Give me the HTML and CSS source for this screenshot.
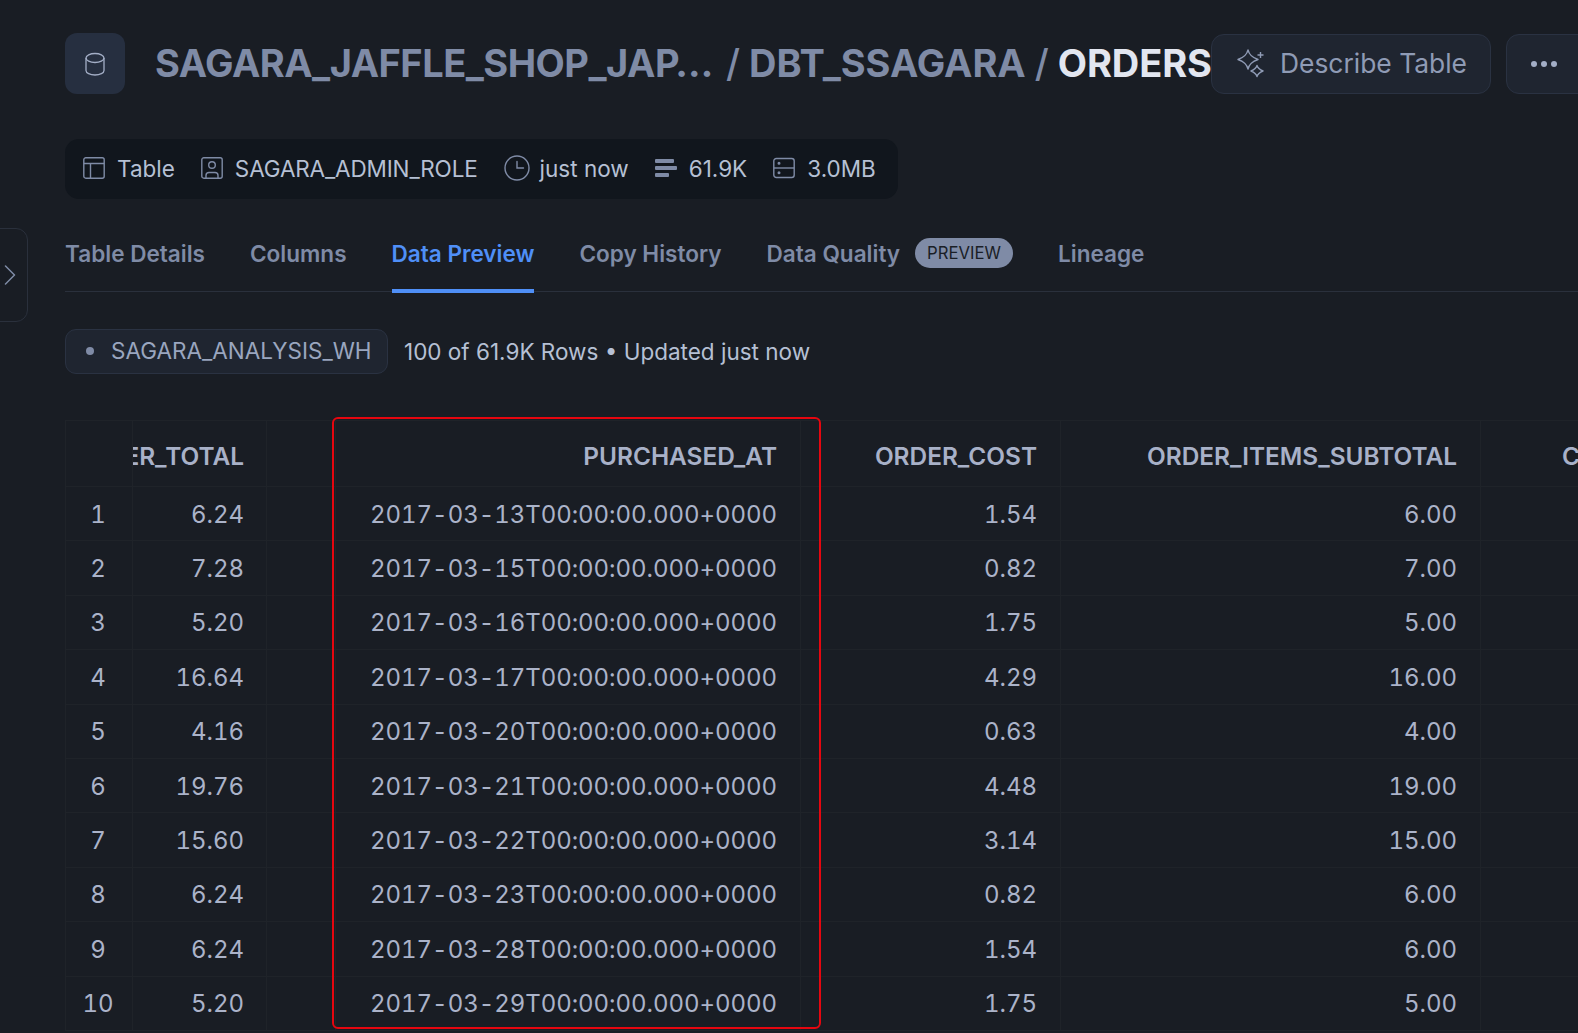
FILE: index.html
```html
<!DOCTYPE html>
<html lang="en">
<head>
<meta charset="utf-8">
<title>ORDERS</title>
<link rel="stylesheet" href="styles.css">
</head>
<body>
<button class="collapse" aria-label="Expand">
  <svg width="12" height="20" viewBox="0 0 12 20" fill="none" stroke="#7f8ba6" stroke-width="1.500" stroke-linecap="round" stroke-linejoin="round"><path d="M1.500 1l9 9-9 9"/></svg>
</button>
<main class="page">
  <header class="head">
    <div class="tile">
      <svg width="22" height="24" viewBox="0 0 22 24" fill="none" stroke="#a3aec6" stroke-width="1.300"><ellipse cx="11" cy="6" rx="9" ry="4.500"/><path d="M2 6v12.500c0 2.500 4 4.500 9 4.500s9-2 9-4.500V6"/></svg>
    </div>
    <h1 class="crumbs"><span class="crumb-db">SAGARA_JAFFLE_SHOP_JAP…</span><span class="sep">/</span><span>DBT_SSAGARA</span><span class="sep">/</span><span class="crumb-cur">ORDERS</span></h1>
    <button class="btn btn-describe">
      <svg width="30" height="30" viewBox="0 0 30 30" fill="none" stroke="#8f9bb5" stroke-width="1.400" stroke-linejoin="round"><path d="M12 2c1.200 4.600 3.400 7 10 9.500-6.600 2.500-8.800 4.900-10 9.500-1.200-4.600-3.400-7-10-9.500 6.600-2.500 8.800-4.900 10-9.500z"/><path d="M21 17.500c.7 2.500 2 3.800 6 5.500-4 1.700-5.300 3-6 5.500-.7-2.500-2-3.800-6-5.500 4-1.700 5.300-3 6-5.500z"/><path d="M24.500 4v6M21.500 7h6"/></svg>
      Describe Table
    </button>
    <button class="btn btn-more" aria-label="More"><i class="dot"></i><i class="dot"></i><i class="dot"></i></button>
  </header>

  <div class="meta">
    <span class="meta-item">
      <svg width="22" height="22" viewBox="0 0 22 22" fill="none" stroke="#7f8ba6" stroke-width="1.400"><rect x=".8" y=".8" width="20.400" height="20.400" rx="2"/><path d="M.8 6.500h20.400M7.500 6.500v14.700"/></svg>Table</span>
    <span class="meta-item meta-role">
      <svg width="22" height="22" viewBox="0 0 22 22" fill="none" stroke="#7f8ba6" stroke-width="1.400"><rect x=".8" y=".8" width="20.400" height="20.400" rx="2"/><circle cx="11" cy="8" r="3.300"/><path d="M5 21v-2.500a3 3 0 0 1 3-3h6a3 3 0 0 1 3 3V21"/></svg>SAGARA_ADMIN_ROLE</span>
    <span class="meta-item meta-time">
      <svg width="26" height="26" viewBox="0 0 26 26" fill="none" stroke="#7f8ba6" stroke-width="1.400" stroke-linecap="round"><circle cx="13" cy="13" r="12"/><path d="M13 6.500V13h6.500"/></svg>just now</span>
    <span class="meta-item">
      <svg width="22" height="22" viewBox="0 0 22 22" fill="#7f8ba6"><rect x="0" y="2" width="19" height="4" rx="1"/><rect x="0" y="9" width="22" height="4" rx="1"/><rect x="0" y="16" width="14" height="4" rx="1"/></svg>61.9K</span>
    <span class="meta-item">
      <svg width="22" height="22" viewBox="0 0 22 22" fill="none" stroke="#7f8ba6" stroke-width="1.400"><rect x=".8" y="1.500" width="20.400" height="19" rx="2.500"/><path d="M.8 11h20.400"/><circle cx="6" cy="6.200" r=".8" fill="#7f8ba6"/><circle cx="6" cy="15.800" r=".8" fill="#7f8ba6"/></svg>3.0MB</span>
  </div>

  <nav class="tabs">
    <a class="tab">Table Details</a>
    <a class="tab">Columns</a>
    <a class="tab active">Data Preview</a>
    <a class="tab">Copy History</a>
    <a class="tab tab-badged">Data Quality <span class="badge">PREVIEW</span></a>
    <a class="tab">Lineage</a>
  </nav>

  <div class="status">
    <span class="wh"><i class="wh-dot"></i>SAGARA_ANALYSIS_WH</span>
    <span class="rows">100 of 61.9K Rows • Updated just now</span>
  </div>

  <div class="grid-wrap">
    <div class="grid">
      <div class="c idx"></div><div class="c th num2"><span>ORDER_TOTAL</span></div><div class="c"></div><div class="c th"><span>PURCHASED_AT</span></div><div class="c th num5"><span>ORDER_COST</span></div><div class="c th num5"><span>ORDER_ITEMS_SUBTOTAL</span></div><div class="c th last"><span>C</span></div>

      <div class="c idx">1</div><div class="c num2">6.24</div><div class="c"></div><div class="c">2017-03-13T00:00:00.000+0000</div><div class="c num5">1.54</div><div class="c num5">6.00</div><div class="c last"></div>
      <div class="c idx">2</div><div class="c num2">7.28</div><div class="c"></div><div class="c">2017-03-15T00:00:00.000+0000</div><div class="c num5">0.82</div><div class="c num5">7.00</div><div class="c last"></div>
      <div class="c idx">3</div><div class="c num2">5.20</div><div class="c"></div><div class="c">2017-03-16T00:00:00.000+0000</div><div class="c num5">1.75</div><div class="c num5">5.00</div><div class="c last"></div>
      <div class="c idx">4</div><div class="c num2">16.64</div><div class="c"></div><div class="c">2017-03-17T00:00:00.000+0000</div><div class="c num5">4.29</div><div class="c num5">16.00</div><div class="c last"></div>
      <div class="c idx">5</div><div class="c num2">4.16</div><div class="c"></div><div class="c">2017-03-20T00:00:00.000+0000</div><div class="c num5">0.63</div><div class="c num5">4.00</div><div class="c last"></div>
      <div class="c idx">6</div><div class="c num2">19.76</div><div class="c"></div><div class="c">2017-03-21T00:00:00.000+0000</div><div class="c num5">4.48</div><div class="c num5">19.00</div><div class="c last"></div>
      <div class="c idx">7</div><div class="c num2">15.60</div><div class="c"></div><div class="c">2017-03-22T00:00:00.000+0000</div><div class="c num5">3.14</div><div class="c num5">15.00</div><div class="c last"></div>
      <div class="c idx">8</div><div class="c num2">6.24</div><div class="c"></div><div class="c">2017-03-23T00:00:00.000+0000</div><div class="c num5">0.82</div><div class="c num5">6.00</div><div class="c last"></div>
      <div class="c idx">9</div><div class="c num2">6.24</div><div class="c"></div><div class="c">2017-03-28T00:00:00.000+0000</div><div class="c num5">1.54</div><div class="c num5">6.00</div><div class="c last"></div>
      <div class="c idx">10</div><div class="c num2">5.20</div><div class="c"></div><div class="c">2017-03-29T00:00:00.000+0000</div><div class="c num5">1.75</div><div class="c num5">5.00</div><div class="c last"></div>
    </div>
    <div class="highlight"></div>
  </div>
</main>
</body>
</html>
```
FILE: styles.css
```css
* { box-sizing: border-box; }
html, body { margin: 0; height: 100%; }
body {
  background: #191d24;
  color: #c3cadb;
  font-family: Inter, "Liberation Sans", sans-serif;
  overflow: hidden;
  position: relative;
  width: 1578px;
  height: 1033px;
}
button { font-family: inherit; }

.collapse {
  position: absolute;
  left: -2px;
  top: 228px;
  width: 30px;
  height: 94px;
  padding: 0 0 0 5px;
  background: #191d24;
  border: 1px solid #2a303c;
  border-radius: 0 12px 12px 0;
  display: flex;
  align-items: center;
}

.page { padding: 33px 0 0 65px; width: 1578px; }

.head { display: flex; align-items: center; height: 61px; white-space: nowrap; }
.tile {
  width: 60px; height: 61px; flex: none;
  background: #262f40;
  border-radius: 12px;
  display: flex; align-items: center; justify-content: center;
}
.crumbs {
  margin: 0 0 0 30px;
  padding-bottom: 2px;
  width: 1056px;
  flex: none;
  font-size: 38px;
  font-weight: 700;
  color: #7f8ba6;
  display: flex;
}
.sep { font-weight: 500; margin: 0 9px; }
.crumb-db { margin-right: 4px; letter-spacing: -.5px; }
.crumb-cur { color: #e2e6f0; letter-spacing: -.1px; }

.btn {
  background: #1f2530;
  border: 1px solid #2a3242;
  border-radius: 13px;
  height: 60px;
  color: #8f9bb5;
  display: flex;
  align-items: center;
  flex: none;
}
.btn-describe { width: 280px; padding: 0 0 2px 24px; gap: 14px; font-size: 26.400px; font-weight: 400; }
.btn-more { width: 90px; margin-left: 15px; padding: 0 0 0 24px; gap: 4px; }
.dot { width: 6px; height: 6px; border-radius: 50%; background: #a3aec6; }

.meta {
  margin-top: 45px;
  width: 833px;
  height: 60px;
  background: #11161d;
  border-radius: 14px;
  padding: 0 0 2px 18px;
  display: flex;
  align-items: center;
  gap: 26px;
  font-size: 22.500px;
  color: #b6c0d4;
  white-space: nowrap;
}
.meta-item { display: flex; align-items: center; gap: 12px; }
.meta-role { letter-spacing: -.15px; }
.meta-time { gap: 10px; }

.tabs {
  margin-top: 30px;
  height: 63px;
  display: flex;
  gap: 45px;
  border-bottom: 1px solid #2a303c;
  font-size: 22.550px;
  font-weight: 600;
  color: #7f8ba6;
}
.tab { display: flex; align-items: center; height: 64px; padding-bottom: 16px; white-space: nowrap; }
.tab.active { color: #4f8ff7; border-bottom: 4px solid #4f8ff7; padding-bottom: 12px; }
.tab-badged { gap: 15px; }
.badge {
  font-size: 16.700px;
  font-weight: 400;
  color: #1a1e26;
  background: #7f8ba6;
  border-radius: 15px;
  padding: 0 12px;
  height: 30px;
  display: flex;
  align-items: center;
}

.status { margin-top: 37px; display: flex; align-items: center; gap: 16px; }
.wh {
  height: 45px;
  width: 323px;
  background: #1f2530;
  border: 1px solid #2a3242;
  border-radius: 11px;
  display: flex;
  align-items: center;
  padding: 0 0 2px 20px;
  gap: 17px;
  font-size: 22.500px;
  color: #9aa6bf;
  white-space: nowrap;
}
.wh-dot { flex: none; width: 8px; height: 8px; border-radius: 50%; background: #7f8ba6; }
.rows { font-size: 22.500px; color: #b6c0d4; white-space: nowrap; }

.grid-wrap { position: relative; margin-top: 46px; }
.grid {
  display: grid;
  grid-template-columns: 67px 134px 69px 465px 260px 420px 97px;
  grid-template-rows: 66px repeat(10, 54.400px);
  border-top: 1px solid #1f2329;
  border-left: 1px solid #1f2329;
  width: 1513px;
}
.c {
  display: flex;
  align-items: center;
  justify-content: flex-end;
  padding-top: 1px;
  padding-right: 23px;
  overflow: hidden;
  font-size: 24px;
  letter-spacing: -.05px;
  font-variant-numeric: tabular-nums;
  font-weight: 400;
  color: #abb3c9;
  white-space: nowrap;
  border-right: 1px solid #1f2329;
  border-bottom: 1px solid #1f2329;
}
.c.th { padding-right: 23px; }
.c.num2 { padding-right: 22px; }
.c.num5 { padding-right: 23px; }
.c.idx { justify-content: center; padding: 1px 2px 0 0; }
.c.th { font-size: 24.400px; font-weight: 600; letter-spacing: 0; color: #a8b1c8; padding-top: 5px; }
.th span { flex: none; }
.c.last { justify-content: flex-start; padding-left: 81px; padding-right: 0; border-right: 0; }
.highlight {
  position: absolute;
  left: 267px;
  top: -3px;
  width: 489px;
  height: 612px;
  border: 2px solid #e6060f;
  border-radius: 6px;
  pointer-events: none;
}
```
